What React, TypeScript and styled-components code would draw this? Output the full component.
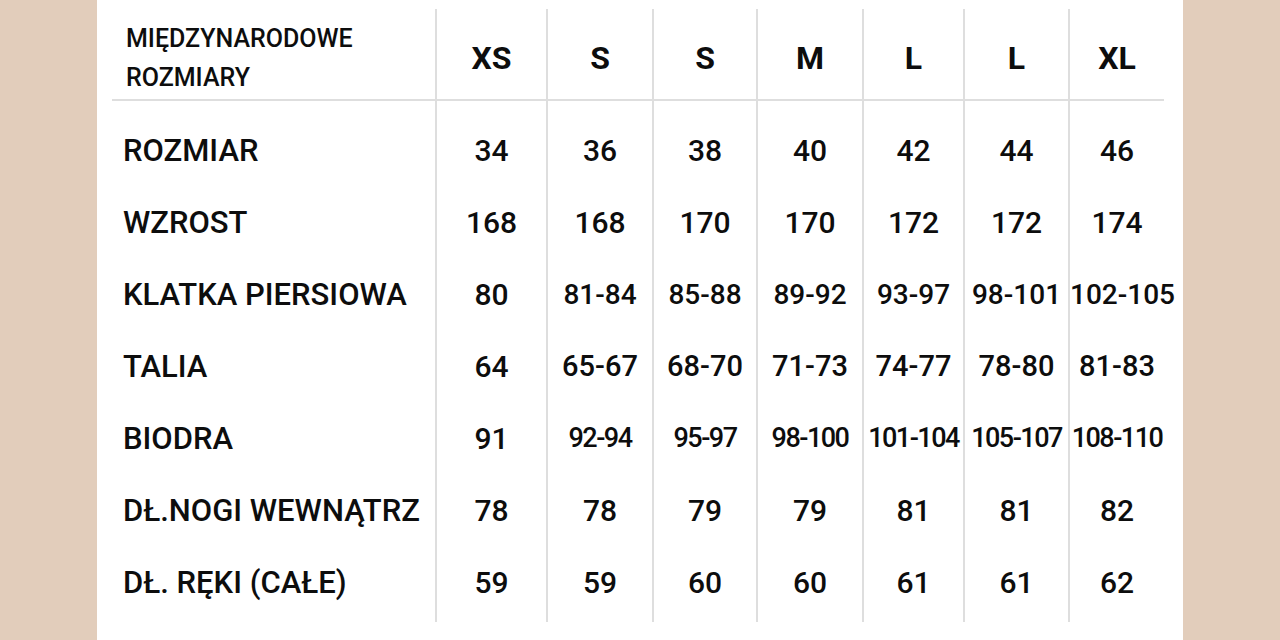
import React from 'react';
import styled, { createGlobalStyle } from 'styled-components';

const GlobalStyle = createGlobalStyle`
    html, body {
        margin: 0;
        padding: 0;
        background-color: #e2cdbb;
    }
    body {
        font-family: Roboto, 'Liberation Sans', sans-serif;
        color: #0d0d0d;
    }
`;

const Page = styled.div`
    display: flex;
    justify-content: center;
    height: 640px;
    overflow: hidden;
`;

const Panel = styled.div`
    width: 1086px;
    height: 640px;
    background-color: #ffffff;
    padding: 9px 19px 0 15px;
    box-sizing: border-box;
`;

const Table = styled.div`
    display: grid;
    grid-template-columns: 323px 111px 106px 104px 106px 101px 105px 96px;
`;

const LINE = '#dedede';

const HeadLabel = styled.div`
    height: 92px;
    box-sizing: border-box;
    padding: 8px 0 0 14px;
    border-bottom: 2px solid ${LINE};
    display: flex;
    align-items: center;
    font-size: 25px;
    font-weight: 500;
    line-height: 39px;
`;

const HeadSize = styled.div`
    height: 92px;
    box-sizing: border-box;
    padding-top: 8px;
    border-left: 2px solid ${LINE};
    border-bottom: 2px solid ${LINE};
    display: flex;
    align-items: center;
    justify-content: center;
    font-size: 32px;
    font-weight: 700;
`;

type CellProps = { $first?: boolean; $last?: boolean };

const RowLabel = styled.div<CellProps>`
    height: ${(p) => 72 + (p.$first ? 13 : 0) + (p.$last ? 4 : 0)}px;
    box-sizing: border-box;
    padding: ${(p) => (p.$first ? 13 : 0)}px 0 ${(p) => (p.$last ? 4 : 0)}px 11px;
    display: flex;
    align-items: center;
    font-size: 31px;
    font-weight: 500;
    white-space: nowrap;
`;

const Value = styled.div<CellProps & { $size: number; $spacing: number }>`
    height: ${(p) => 72 + (p.$first ? 13 : 0) + (p.$last ? 4 : 0)}px;
    box-sizing: border-box;
    padding: ${(p) => (p.$first ? 13 : 0)}px 0 ${(p) => (p.$last ? 4 : 0)}px 0;
    border-left: 2px solid ${LINE};
    display: flex;
    align-items: center;
    justify-content: safe center;
    font-size: ${(p) => p.$size}px;
    letter-spacing: ${(p) => p.$spacing}px;
    font-weight: 500;
    white-space: nowrap;
`;

const sizes = ['XS', 'S', 'S', 'M', 'L', 'L', 'XL'];

type Row = { label: string; values: string[]; rangeSize?: number; rangeSpacing?: number };

const rows: Row[] = [
    { label: 'ROZMIAR', values: ['34', '36', '38', '40', '42', '44', '46'] },
    { label: 'WZROST', values: ['168', '168', '170', '170', '172', '172', '174'] },
    {
        label: 'KLATKA PIERSIOWA',
        values: ['80', '81-84', '85-88', '89-92', '93-97', '98-101', '102-105'],
        rangeSize: 28,
    },
    { label: 'TALIA', values: ['64', '65-67', '68-70', '71-73', '74-77', '78-80', '81-83'], rangeSize: 29 },
    {
        label: 'BIODRA',
        values: ['91', '92-94', '95-97', '98-100', '101-104', '105-107', '108-110'],
        rangeSize: 27,
        rangeSpacing: -1.5,
    },
    { label: 'DŁ.NOGI WEWNĄTRZ', values: ['78', '78', '79', '79', '81', '81', '82'] },
    { label: 'DŁ. RĘKI (CAŁE)', values: ['59', '59', '60', '60', '61', '61', '62'] },
];

export default function App() {
    return (
        <>
            <GlobalStyle />
            <Page>
                <Panel>
                    <Table>
                        <HeadLabel>
                            MIĘDZYNARODOWE
                            <br />
                            ROZMIARY
                        </HeadLabel>
                        {sizes.map((s, i) => (
                            <HeadSize key={i}>{s}</HeadSize>
                        ))}
                        {rows.map((row, r) => {
                            const first = r === 0;
                            const last = r === rows.length - 1;
                            return (
                                <React.Fragment key={row.label}>
                                    <RowLabel $first={first} $last={last}>
                                        {row.label}
                                    </RowLabel>
                                    {row.values.map((v, i) => {
                                        const isRange = v.includes('-');
                                        return (
                                            <Value
                                                key={i}
                                                $first={first}
                                                $last={last}
                                                $size={isRange && row.rangeSize ? row.rangeSize : 30}
                                                $spacing={isRange && row.rangeSpacing ? row.rangeSpacing : 0}
                                            >
                                                {v}
                                            </Value>
                                        );
                                    })}
                                </React.Fragment>
                            );
                        })}
                    </Table>
                </Panel>
            </Page>
        </>
    );
}
